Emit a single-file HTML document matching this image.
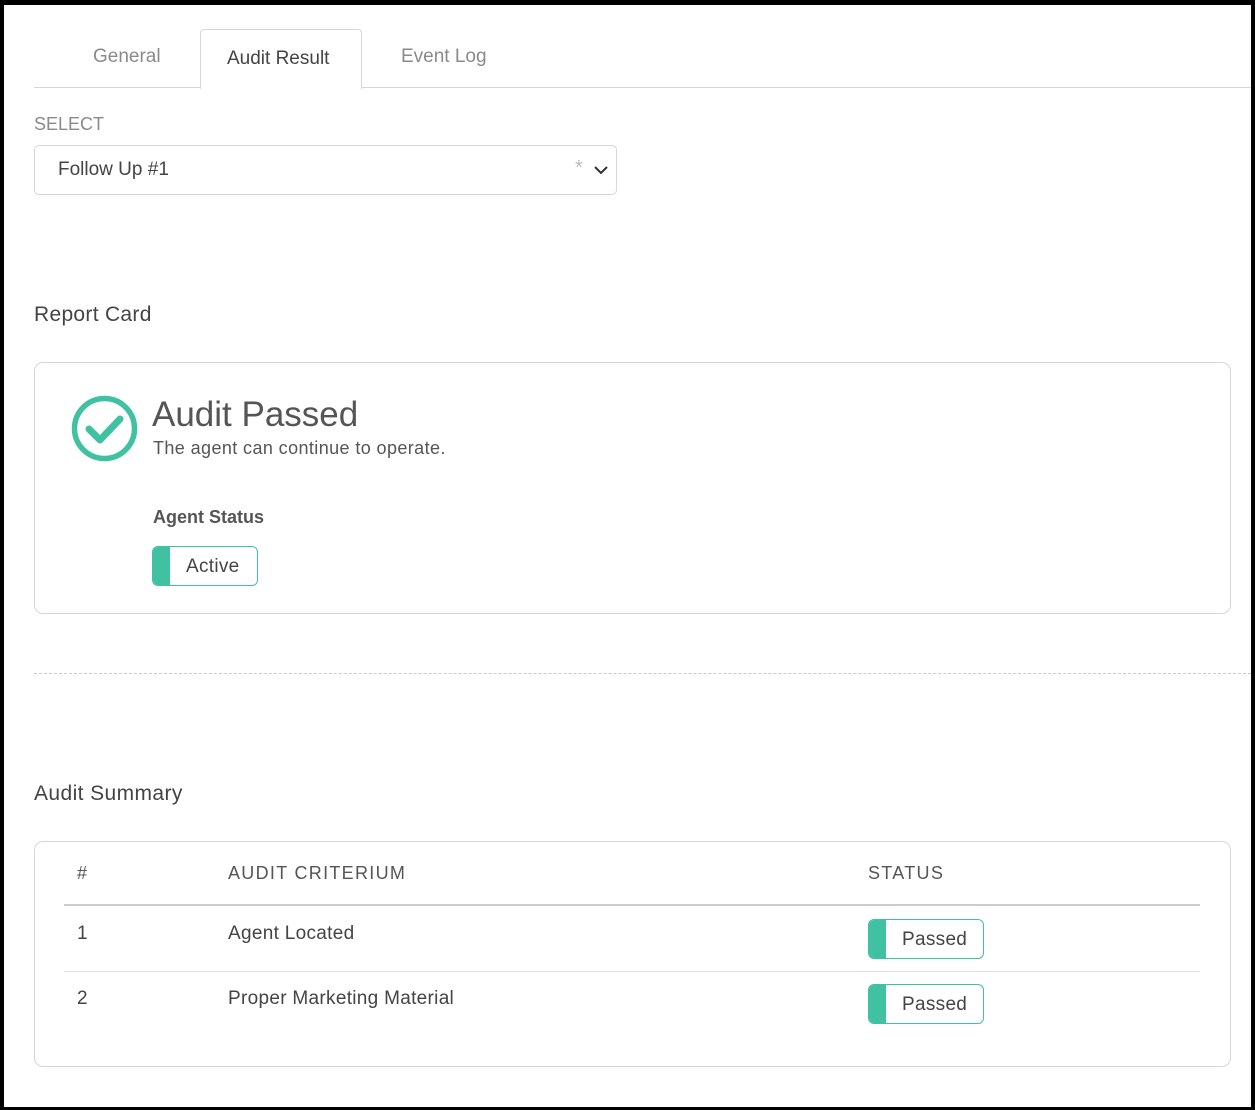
<!DOCTYPE html>
<html><head><meta charset="utf-8"><style>
*{box-sizing:border-box;margin:0;padding:0}
html,body{width:1255px;height:1110px;overflow:hidden;background:#fff}
body{font-family:"Liberation Sans",sans-serif;color:#444;position:relative}
.frame{position:absolute;left:0;top:0;width:1255px;height:1110px;border-style:solid;border-color:#000;border-width:5px 4px 3px 4px;pointer-events:none}
.a{position:absolute;white-space:nowrap}
.badge{position:absolute;border:1.5px solid #40c1a1;border-radius:6px;overflow:hidden;background:#fff;color:#444;font-size:19px;letter-spacing:0.3px}
.badge:before{content:"";position:absolute;left:0;top:0;bottom:0;width:17px;background:#40c1a1}
</style></head><body>
<div class="a" style="left:34px;top:87px;width:1217px;height:1px;background:#d6d6d6"></div>
<div class="a" style="left:200px;top:29px;width:162px;height:60px;border:1px solid #d6d6d6;border-bottom:none;border-radius:4px 4px 0 0;background:#fff"></div>
<div class="a" style="left:93px;top:46px;font-size:19px;color:#8a8a8a">General</div>
<div class="a" style="left:227px;top:48px;font-size:19px;color:#444">Audit Result</div>
<div class="a" style="left:401px;top:46px;font-size:19px;color:#8a8a8a">Event Log</div>
<div class="a" style="left:34px;top:114px;font-size:18px;color:#8a8a8a">SELECT</div>
<div class="a" style="left:34px;top:145px;width:583px;height:50px;border:1px solid #d6d6d6;border-radius:5px"></div>
<div class="a" style="left:58px;top:159px;font-size:19px;color:#444">Follow Up #1</div>
<div class="a" style="left:575px;top:157px;font-size:20px;color:#bbb">*</div>
<svg class="a" style="left:593px;top:164px" width="16" height="12"><path d="M2 3 L8 9 L14 3" fill="none" stroke="#333" stroke-width="2"/></svg>
<div class="a" style="left:34px;top:303px;font-size:21px;color:#444;letter-spacing:0.3px">Report Card</div>
<div class="a" style="left:34px;top:362px;width:1197px;height:252px;border:1px solid #d6d6d6;border-radius:9px"></div>
<svg class="a" style="left:71px;top:395px" width="67" height="67"><circle cx="33.5" cy="33.5" r="30" fill="none" stroke="#40c1a1" stroke-width="5.5"/><path d="M18 34 L29 45 L49 24" fill="none" stroke="#40c1a1" stroke-width="7" stroke-linecap="round" stroke-linejoin="round"/></svg>
<div class="a" style="left:152px;top:395px;font-size:35px;color:#555">Audit Passed</div>
<div class="a" style="left:153px;top:438px;font-size:18px;color:#555;letter-spacing:0.4px">The agent can continue to operate.</div>
<div class="a" style="left:153px;top:507px;font-size:18px;font-weight:bold;color:#555">Agent Status</div>
<div class="badge" style="left:152px;top:546px;width:106px;height:40px"><span class="a" style="left:33px;top:9px">Active</span></div>
<div class="a" style="left:34px;top:673px;width:1217px;border-top:1px dashed #ccc"></div>
<div class="a" style="left:34px;top:782px;font-size:21px;color:#444;letter-spacing:0.4px">Audit Summary</div>
<div class="a" style="left:34px;top:841px;width:1197px;height:226px;border:1px solid #d6d6d6;border-radius:9px"></div>
<div class="a" style="left:77px;top:863px;font-size:18px;color:#555;letter-spacing:1.5px">#</div>
<div class="a" style="left:228px;top:863px;font-size:18px;color:#555;letter-spacing:1.3px">AUDIT CRITERIUM</div>
<div class="a" style="left:868px;top:863px;font-size:18px;color:#555;letter-spacing:1.3px">STATUS</div>
<div class="a" style="left:64px;top:904px;width:1136px;height:2px;background:#ccc"></div>
<div class="a" style="left:77px;top:923px;font-size:19px;color:#444">1</div>
<div class="a" style="left:228px;top:923px;font-size:19px;color:#444;letter-spacing:0.3px">Agent Located</div>
<div class="badge" style="left:868px;top:919px;width:116px;height:40px"><span class="a" style="left:33px;top:9px">Passed</span></div>
<div class="a" style="left:64px;top:971px;width:1136px;height:1px;background:#ddd"></div>
<div class="a" style="left:77px;top:988px;font-size:19px;color:#444">2</div>
<div class="a" style="left:228px;top:988px;font-size:19px;color:#444;letter-spacing:0.3px">Proper Marketing Material</div>
<div class="badge" style="left:868px;top:984px;width:116px;height:40px"><span class="a" style="left:33px;top:9px">Passed</span></div>
<div class="frame"></div>
</body></html>
